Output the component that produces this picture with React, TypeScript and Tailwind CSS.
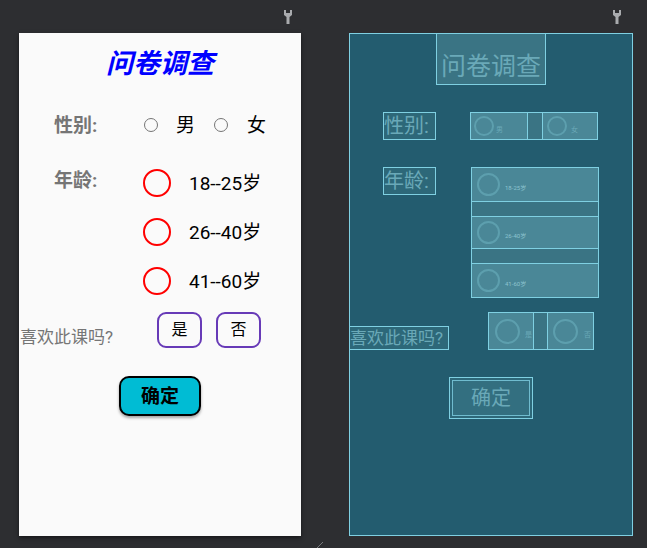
import React from 'react';

const cjk = { fontFamily: 'Roboto, "Noto Sans CJK SC", sans-serif' };

function Wrench() {
  return (
    <svg width="8" height="14" viewBox="0 0 8 14">
      <path d="M0 0 H2 V3 H6 V0 H8 V5 L5.5 7 V14 H2.5 V7 L0 5 Z" fill="#a9abae" />
    </svg>
  );
}

const ages = ['18--25岁', '26--40岁', '41--60岁'];

function Design() {
  return (
    <div className="w-[282px] h-[503px] bg-[#fafafa] shadow-[0_2px_4px_rgba(0,0,0,0.5)] flex flex-col" style={cjk}>
      <div className="h-[51px] flex items-center justify-center pt-[12px]">
        <span className="text-[27px] italic font-bold text-[#0000ff] leading-none">问卷调查</span>
      </div>

      <div className="mt-[27px] h-[28px] flex items-center">
        <span className="ml-[35px] w-[86px] text-[19px] font-bold text-[#757575] leading-none">性别:</span>
        <div className="flex items-center">
          <div className="w-[57px] flex items-center pl-[4px]">
            <span className="w-[14px] h-[14px] rounded-full border-[1.5px] border-[#757575]" />
            <span className="ml-[18px] text-[19px] text-black leading-none">男</span>
          </div>
          <div className="ml-[14px] w-[57px] flex items-center pl-[3px]">
            <span className="w-[14px] h-[14px] rounded-full border-[1.5px] border-[#757575]" />
            <span className="ml-[19px] text-[19px] text-black leading-none">女</span>
          </div>
        </div>
      </div>

      <div className="mt-[27px] flex">
        <div className="ml-[35px] w-[87px] h-[28px] flex items-center">
          <span className="text-[19px] font-bold text-[#757575] leading-none">年龄:</span>
        </div>
        <div className="flex flex-col gap-[15px]">
          {ages.map((a) => (
            <div key={a} className="h-[34px] flex items-center">
              <span className="ml-[2px] w-[28px] h-[28px] rounded-full border-2 border-[#ff0000]" />
              <span className="ml-[18px] text-[19px] text-black leading-none">{a}</span>
            </div>
          ))}
        </div>
      </div>

      <div className="mt-[14px] flex items-center">
        <span className="mt-[14px] ml-px w-[137px] text-[17px] text-[#757575] leading-none">喜欢此课吗?</span>
        <div className="flex">
          <div className="w-[45px] h-[36px] rounded-[9px] border-2 border-[#673ab7] flex items-center justify-center text-[16px] text-black">是</div>
          <div className="ml-[14px] w-[45px] h-[36px] rounded-[9px] border-2 border-[#673ab7] flex items-center justify-center text-[16px] text-black">否</div>
        </div>
      </div>

      <div className="mt-[28px] ml-[100px] w-[82px] h-[40px] rounded-[10px] border-2 border-black bg-[#00bcd4] shadow-[0_2px_3px_rgba(0,0,0,0.35)] flex items-center justify-center">
        <span className="text-[19px] font-bold text-black leading-none">确定</span>
      </div>
    </div>
  );
}

function BpCircle({ size = 20 }: { size?: number }) {
  return <span className="rounded-full border-2 border-[#5d9fae] shrink-0" style={{ width: size, height: size }} />;
}

function Blueprint() {
  const box = 'border border-[#7fd0e2]';
  return (
    <div className="w-[284px] h-[503px] bg-[#235c6f] border border-[#7fd0e2] flex flex-col" style={cjk}>
      <div className="flex justify-center">
        <div className={`w-[110px] h-[51px] bg-[#3a7484] ${box} border-t-0 flex items-end justify-center pb-[5px]`}>
          <span className="text-[25px] text-[#6aa9b8] leading-none">问卷调查</span>
        </div>
      </div>

      <div className="mt-[27px] flex">
        <div className={`ml-[33px] w-[53px] h-[28px] bg-[#2d6879] ${box} flex items-center`}>
          <span className="text-[20px] text-[#6aa9b8] leading-none">性别:</span>
        </div>
        <div className={`ml-[34px] w-[128px] h-[28px] bg-[#3a7484] ${box} flex`}>
          <div className="w-[57px] h-full bg-[#4a8797] flex items-center pl-[3px] border-r border-[#7fd0e2]">
            <BpCircle />
            <span className="ml-[2px] mt-[8px] text-[7px] text-[#6aa9b8]">男</span>
          </div>
          <div className="w-[14px]" />
          <div className="flex-1 h-full bg-[#4a8797] flex items-center pl-[4px] border-l border-[#7fd0e2]">
            <BpCircle />
            <span className="ml-[4px] mt-[8px] text-[7px] text-[#6aa9b8]">女</span>
          </div>
        </div>
      </div>

      <div className="mt-[27px] flex">
        <div className={`ml-[33px] w-[53px] h-[28px] bg-[#2d6879] ${box} flex items-center`}>
          <span className="text-[20px] text-[#6aa9b8] leading-none">年龄:</span>
        </div>
        <div className={`ml-[35px] w-[128px] h-[131px] bg-[#3a7484] ${box} flex flex-col`}>
          {ages.map((a, i) => (
            <div
              key={a}
              className={`h-[34px] bg-[#4a8797] flex items-center pl-[5px] ${i > 0 ? 'mt-[14px] border-t' : ''} ${i < 2 ? 'border-b' : ''} border-[#7fd0e2]`}
            >
              <BpCircle size={23} />
              <span className="ml-[5px] mt-[6px] text-[6px] text-[#8cc3cf]">{a.replace('--', '-')}</span>
            </div>
          ))}
        </div>
      </div>

      <div className="mt-[14px] flex items-start">
        <div className={`mt-[14px] w-[99px] h-[24px] bg-[#2d6879] ${box} border-l-0 flex items-center`}>
          <span className="text-[17px] text-[#6aa9b8] leading-none">喜欢此课吗?</span>
        </div>
        <div className={`ml-[39px] w-[106px] h-[38px] bg-[#3a7484] ${box} flex`}>
          <div className="w-[45px] h-full bg-[#4a8797] flex items-center pl-[6px] border-r border-[#7fd0e2]">
            <BpCircle size={25} />
            <span className="ml-[5px] mt-[8px] text-[7px] text-[#6aa9b8]">是</span>
          </div>
          <div className="w-[13px]" />
          <div className="flex-1 h-full bg-[#4a8797] flex items-center pl-[5px] border-l border-[#7fd0e2]">
            <BpCircle size={25} />
            <span className="ml-[6px] mt-[8px] text-[7px] text-[#6aa9b8]">否</span>
          </div>
        </div>
      </div>

      <div className={`mt-[27px] ml-[99px] w-[84px] h-[42px] bg-[#2d6879] ${box} p-[2px]`}>
        <div className="w-full h-full border border-[#7fd0e2]/80 bg-[#336f80] flex items-center justify-center">
          <span className="text-[20px] text-[#6aa9b8] leading-none">确定</span>
        </div>
      </div>
    </div>
  );
}

export default function App() {
  return (
    <div className="w-[647px] h-[548px] bg-[#2d2e31] flex overflow-hidden">
      <div className="ml-[19px] flex flex-col">
        <div className="h-[33px] flex justify-end items-start pt-[10px] pr-[9px]">
          <Wrench />
        </div>
        <Design />
        <div className="h-[12px] flex justify-end items-start pt-[6px]">
          <svg width="8" height="8" viewBox="0 0 8 8" className="translate-x-[22px]">
            <path d="M0 8 L8 0" stroke="#77797c" strokeWidth="1" />
          </svg>
        </div>
      </div>
      <div className="ml-[48px] flex flex-col">
        <div className="h-[33px] flex justify-end items-start pt-[10px] pr-[12px]">
          <Wrench />
        </div>
        <Blueprint />
      </div>
    </div>
  );
}
